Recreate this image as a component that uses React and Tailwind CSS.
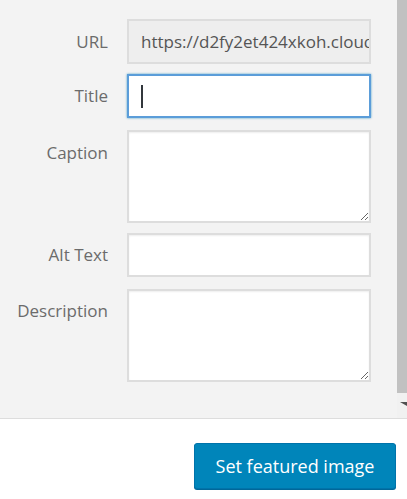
import React from 'react';

// Painel de detalhes do anexo (campos de mídia) com barra inferior
const font = { fontFamily: '"Open Sans", "Noto Sans", sans-serif' };

const Label = ({ children, className = '' }) => (
  <div className={`w-[108px] shrink-0 text-right text-[17px] text-[#6b6b6b] leading-[22px] ${className}`}>
    {children}
  </div>
);

const App = () => {
  return (
    <div className="w-[407px] h-[499px] flex flex-col bg-white overflow-hidden" style={font}>
      <div className="h-[418px] flex bg-[#f3f3f3]">
        <div className="flex-1 flex flex-col pt-[19px] pr-[26px]">
          <div className="flex items-center gap-[19px]">
            <Label>URL</Label>
            <div className="w-[244px] h-[45px] border-2 border-[#ddd] bg-[#eee] flex items-center pl-[12px] overflow-hidden whitespace-nowrap text-[17px] text-[#555]">
              https://d2fy2et424xkoh.cloudfront.net/wp-content/uploads
            </div>
          </div>

          <div className="flex items-center gap-[19px] mt-[10px]">
            <Label>Title</Label>
            <div className="w-[244px] h-[44px] border-2 border-[#5b9dd9] bg-white flex items-center pl-[12px] shadow-[0_0_2px_rgba(30,140,190,0.8)]">
              <span className="block w-[2px] h-[23px] bg-[#32373c]" />
            </div>
          </div>

          <div className="flex items-start gap-[19px] mt-[12px]">
            <Label className="pt-[12px]">Caption</Label>
            <textarea className="w-[244px] h-[93px] border-2 border-[#ddd] bg-white outline-none shadow-[inset_0_1px_2px_rgba(0,0,0,0.07)]" />
          </div>

          <div className="flex items-center gap-[19px] mt-[10px]">
            <Label>Alt Text</Label>
            <div className="w-[244px] h-[44px] border-2 border-[#ddd] bg-white shadow-[inset_0_1px_2px_rgba(0,0,0,0.07)]" />
          </div>

          <div className="flex items-start gap-[19px] mt-[12px]">
            <Label className="pt-[11px]">Description</Label>
            <textarea className="w-[244px] h-[93px] border-2 border-[#ddd] bg-white outline-none shadow-[inset_0_1px_2px_rgba(0,0,0,0.07)]" />
          </div>
        </div>

        {/* barra de rolagem */}
        <div className="w-[10px] flex flex-col bg-[#f1f1f1]">
          <div className="h-[393px] bg-[#c1c1c1]" />
          <div className="flex-1 flex items-start justify-end pt-[9px]">
            <svg width="7" height="4" viewBox="0 0 7 4">
              <polygon points="0,0 7,0 7,4" fill="#505050" />
            </svg>
          </div>
        </div>
      </div>

      <div className="flex-1 border-t border-[#ddd] flex justify-end items-start pt-[24px] pr-[11px]">
        <button className="w-[202px] h-[46px] rounded-[3px] bg-[#0085ba] border border-[#0073aa] shadow-[0_1px_0_#006799] text-white text-[18px]">
          Set featured image
        </button>
      </div>
    </div>
  );
};

export default App;
